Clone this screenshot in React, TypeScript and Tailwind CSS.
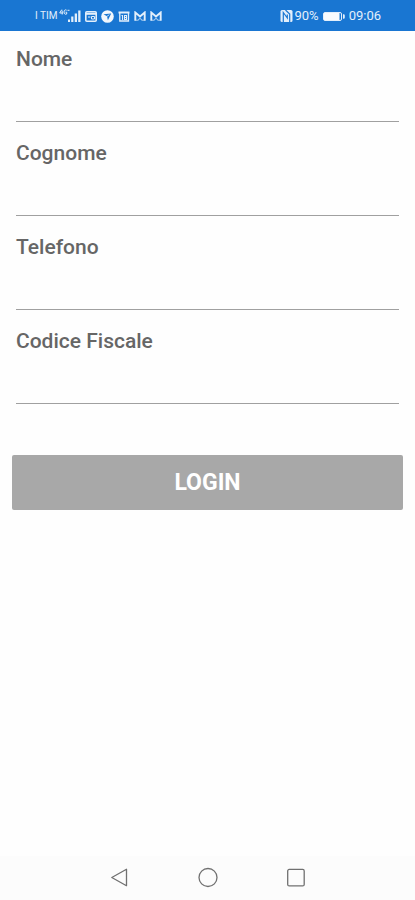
import { useState } from "react";

interface FormData {
  nome: string;
  cognome: string;
  telefono: string;
  codiceFiscale: string;
}

const fields: { name: keyof FormData; label: string; type: string }[] = [
  { name: "nome", label: "Nome", type: "text" },
  { name: "cognome", label: "Cognome", type: "text" },
  { name: "telefono", label: "Telefono", type: "tel" },
  { name: "codiceFiscale", label: "Codice Fiscale", type: "text" },
];

function MailIcon() {
  return (
    <svg width="12" height="10" viewBox="0 0 12 10" fill="none" stroke="currentColor">
      <path d="M1.3 9.500V1.500L6 5.500l4.700-4v8" strokeWidth="1.900" />
      <path d="M0.500 9.200h3.500l2-2 2 2h3.500" strokeWidth="1.100" opacity="0.7" />
    </svg>
  );
}

function StatusBar() {
  return (
    <header className="flex h-[31px] items-center justify-between bg-[#1976d2] pl-[35px] pr-[34px] pt-px text-[#e3effb]">
      <div className="flex items-center gap-1">
        <div className="flex items-center gap-0.5">
          <span className="text-[10px] leading-4">I TIM</span>
          {/* 4G signal */}
          <svg width="22" height="14" viewBox="0 0 22 14" fill="currentColor">
            <path
              d="M2.800 0.600L0.700 4h3.500M3.200 1.500v4M7.600 1.200C6.200 .3 5 1.200 5 3s1.400 2.800 2.700 2V3.200H6.500M8.500 1.300h2"
              fill="none"
              stroke="currentColor"
              strokeWidth="1"
            />
            <path d="M9 10.500h2V13H9zM12.200 7.500h2.200V13h-2.200zM15.700 4.500h2.300V13h-2.300zM19.200 1.500h2.300V13h-2.300z" />
          </svg>
        </div>
        {/* Calendar */}
        <svg width="12" height="11" viewBox="0 0 12 11" fill="none" stroke="currentColor">
          <rect x="0.8" y="0.8" width="10.400" height="9.400" rx="1" strokeWidth="1.600" />
          <path d="M1 2.800h10" strokeWidth="2" />
          <path d="M3 6h2.500M6.500 5.500h3v2.500h-3z" strokeWidth="1" />
        </svg>
        {/* Round messenger badge */}
        <svg width="13" height="13" viewBox="0 0 13 13">
          <circle cx="6.500" cy="6.500" r="6.300" fill="#f1f7fd" />
          <path d="M2.500 4.300l7.700-.8-3.300 6.700-.9-3.900z" fill="#1976d2" />
          <path d="M6 6.300l2.300-1.600" stroke="#f1f7fd" strokeWidth="0.8" />
        </svg>
        {/* Date badge */}
        <svg width="12" height="11" viewBox="0 0 12 11" fill="none" stroke="currentColor">
          <path d="M0.500 1.500h11" strokeWidth="2" />
          <path d="M1.800 2v8h8.700V2" strokeWidth="1.300" />
          <path d="M3.500 4.500h1V9M6.500 4.500h2v4h-2zM6.500 6.500h2" strokeWidth="1.100" />
        </svg>
        <MailIcon />
        <MailIcon />
      </div>

      <div className="flex items-center gap-1">
        <div className="flex items-center gap-px">
          {/* NFC */}
          <svg width="13" height="12" viewBox="0 0 13 12">
            <rect x="0.500" width="12" height="12" rx="1.500" fill="currentColor" />
            <path
              d="M3.300 12V2.500l4 5.500V4.500M5.500 0l4.200 4v8"
              fill="none"
              stroke="#1976d2"
              strokeWidth="1.200"
            />
          </svg>
          <span className="text-[13px] leading-4">90%</span>
        </div>
        <svg width="22" height="9" viewBox="0 0 22 9" fill="currentColor">
          <rect x="0.500" y="0.500" width="18" height="8" rx="1.500" fill="none" stroke="currentColor" />
          <rect x="1" y="1" width="15.500" height="7" fill="#f8fbfe" />
          <path d="M20 2.200h.6a1.200 1.200 0 0 1 1.200 1.200v2.200a1.200 1.200 0 0 1-1.200 1.200H20z" />
        </svg>
        <span className="text-[13px] leading-4">09:06</span>
      </div>
    </header>
  );
}

function NavigationBar() {
  return (
    <nav className="flex h-11 items-center justify-center gap-[66px] bg-[#fcfcfc] text-[#707070]">
      <button type="button" aria-label="Indietro">
        <svg width="22" height="22" viewBox="0 0 22 22" fill="none" stroke="currentColor" strokeWidth="1.300">
          <path d="M17.500 2.300v16.400L2.800 10.500z" strokeLinejoin="round" />
        </svg>
      </button>
      <button type="button" aria-label="Home">
        <svg width="22" height="22" viewBox="0 0 22 22" fill="none" stroke="currentColor" strokeWidth="1.300">
          <circle cx="11" cy="10.500" r="9" />
        </svg>
      </button>
      <button type="button" aria-label="Recenti">
        <svg width="22" height="22" viewBox="0 0 22 22" fill="none" stroke="currentColor" strokeWidth="1.300">
          <rect x="2.700" y="2.400" width="16.500" height="16.500" rx="1.500" />
        </svg>
      </button>
    </nav>
  );
}

export default function App() {
  const [form, setForm] = useState<FormData>({
    nome: "",
    cognome: "",
    telefono: "",
    codiceFiscale: "",
  });

  const handleChange = (e: React.ChangeEvent<HTMLInputElement>) => {
    const { name, value } = e.target;
    setForm((prev) => ({ ...prev, [name]: value }));
  };

  const handleSubmit = (e: React.FormEvent<HTMLFormElement>) => {
    e.preventDefault();
  };

  return (
    <div className="flex min-h-screen flex-col bg-[#fefefe] font-[Roboto,sans-serif]">
      <StatusBar />

      <main className="flex-1 px-3 pt-[13px]">
        <form onSubmit={handleSubmit}>
          <div className="flex flex-col gap-4 px-1">
            {fields.map((field) => (
              <div key={field.name}>
                <label
                  htmlFor={field.name}
                  className="block text-[21px] leading-[30px] font-medium text-[#666666]"
                >
                  {field.label}
                </label>
                <input
                  id={field.name}
                  name={field.name}
                  type={field.type}
                  value={form[field.name]}
                  onChange={handleChange}
                  className="block h-12 w-full border-b border-[#a0a0a0] bg-transparent pt-3 text-lg text-[#444444] focus:outline-none"
                />
              </div>
            ))}
          </div>

          <button
            type="submit"
            className="mt-[51px] h-[55px] w-full rounded-xs bg-[#a8a8a8] text-[23px] leading-7 font-bold text-white"
          >
            LOGIN
          </button>
        </form>
      </main>

      <NavigationBar />
    </div>
  );
}
